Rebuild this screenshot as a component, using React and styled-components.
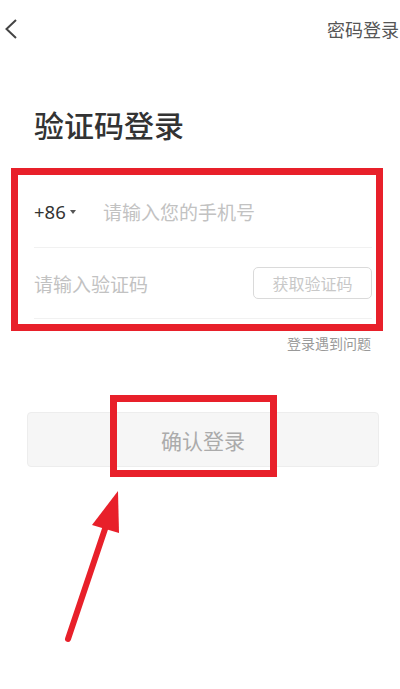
import React from 'react';
import styled, { createGlobalStyle } from 'styled-components';

const Global = createGlobalStyle`
  body {
    margin: 0;
    background: #fff;
    font-family: "Noto Sans CJK SC", "Noto Sans", sans-serif;
  }
`;

const Page = styled.div`
  position: relative;
  width: 400px;
  height: 689px;
  overflow: hidden;
`;

const Header = styled.div`
  height: 57px;
  display: flex;
  align-items: center;
  justify-content: space-between;
  padding: 0 1px 0 4px;
`;

const Back = styled.button`
  border: 0;
  background: none;
  padding: 0;
  width: 14px;
  height: 20px;
  display: flex;
`;

const SwitchLink = styled.span`
  font-size: 18px;
  color: #555;
  line-height: 1;
`;

const Title = styled.h1`
  margin: 52px 0 0 34px;
  font-size: 30px;
  line-height: 30px;
  font-weight: 500;
  color: #333;
`;

const Form = styled.div`
  margin: 29px 0 0 11px;
  width: 372px;
  box-sizing: border-box;
  border: 7px solid #e8202a;
  padding: 0 4px 5px 16px;
`;

const Row = styled.div`
  display: flex;
  align-items: center;
  height: ${p => p.h}px;
  border-bottom: 1px solid #f1f1f1;
`;

const Prefix = styled.div`
  display: flex;
  align-items: center;
  gap: 4px;
  width: 69px;
  font-family: "Noto Sans", sans-serif;
  font-size: 18.5px;
  color: #333;
`;

const Caret = styled.span`
  width: 0;
  height: 0;
  border-left: 3.5px solid transparent;
  border-right: 3.5px solid transparent;
  border-top: 4px solid #555;
  margin-top: 2px;
`;

const Field = styled.input`
  flex: 1;
  min-width: 0;
  border: 0;
  outline: none;
  padding: 0;
  background: transparent;
  font-family: "Noto Sans CJK SC", sans-serif;
  font-size: 19px;
  color: #333;
  &::placeholder {
    color: #c2c2c2;
  }
`;

const CodeButton = styled.button`
  width: 119px;
  height: 32px;
  border: 1.5px solid #dadada;
  border-radius: 5px;
  background: #fff;
  font-family: "Noto Sans CJK SC", sans-serif;
  font-size: 16px;
  color: #c8c8c8;
  padding: 0;
`;

const Help = styled.div`
  margin: 2px 29px 0 0;
  text-align: right;
  font-size: 14px;
  line-height: 20px;
  color: #999;
`;

const SubmitWrap = styled.div`
  position: relative;
  margin: 59px 0 0 27px;
  width: 352px;
`;

const Submit = styled.button`
  width: 100%;
  height: 55px;
  border: 1px solid #ededed;
  border-radius: 4px;
  background: #f6f6f6;
  font-family: "Noto Sans CJK SC", sans-serif;
  font-size: 21px;
  color: #ababab;
  padding: 0;
`;

const Mark = styled.div`
  position: absolute;
  left: 83px;
  top: -17px;
  width: 167px;
  height: 82px;
  box-sizing: border-box;
  border: 7px solid #e8202a;
  pointer-events: none;
`;

const Arrow = styled.svg`
  position: absolute;
  left: 0;
  top: 480px;
  width: 140px;
  height: 170px;
  pointer-events: none;
`;

export default function App() {
  return (
    <Page>
      <Global />
      <Header>
        <Back aria-label="back">
          <svg width="14" height="20" viewBox="0 0 14 20">
            <path d="M12 1 L2.5 10 L12 19" fill="none" stroke="#444" strokeWidth="2" />
          </svg>
        </Back>
        <SwitchLink>密码登录</SwitchLink>
      </Header>

      <Title>验证码登录</Title>

      <Form>
        <Row h={72}>
          <Prefix>+86<Caret /></Prefix>
          <Field placeholder="请输入您的手机号" />
        </Row>
        <Row h={70}>
          <Field placeholder="请输入验证码" />
          <CodeButton>获取验证码</CodeButton>
        </Row>
      </Form>

      <Help>登录遇到问题</Help>

      <SubmitWrap>
        <Submit>确认登录</Submit>
        <Mark />
      </SubmitWrap>

      <Arrow viewBox="0 480 140 170">
        <line x1="68" y1="639" x2="106" y2="526" stroke="#e8202a" strokeWidth="6" strokeLinecap="round" />
        <polygon points="118,491 92,525 119,533" fill="#e8202a" />
      </Arrow>
    </Page>
  );
}
